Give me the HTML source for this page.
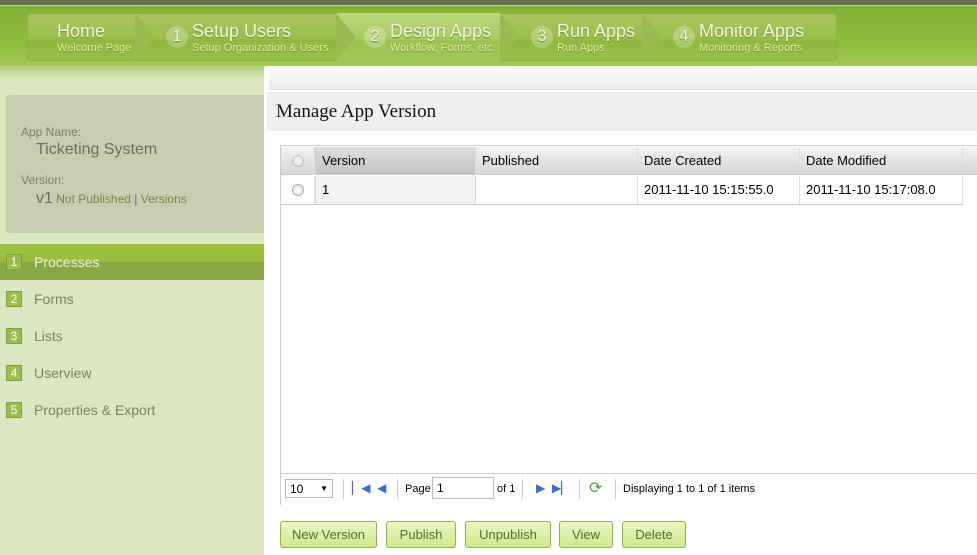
<!DOCTYPE html>
<html><head><style>
*{margin:0;padding:0;box-sizing:border-box}
body{width:977px;height:555px;overflow:hidden;font-family:"Liberation Sans",sans-serif;background:#dce6c0;position:relative}
.top{position:absolute;left:0;top:0;width:977px;height:6px;background:#667050;border-bottom:1px solid #b9d27a}
.hdr{position:absolute;left:0;top:6px;width:977px;height:60px;background:linear-gradient(#82b236,#90bf40 70%,#a4c95a)}
.tabs{position:absolute;left:27px;top:13px;width:810px;height:48px;border-radius:4px;background:linear-gradient(#a9c65e,#9cbd4e 55%,#8fb840 56%,#96bd48);border:1px solid #8db03f}
.tab{position:absolute;top:13px;height:48px;color:#f2f6e0;text-shadow:0 1px 1px #6a8a2a}
.tab .t{font-size:18px;position:absolute;top:8px;white-space:nowrap}
.tab .s{font-size:11px;color:#e4ef9a;position:absolute;top:29px;white-space:nowrap}
.tab .n{position:absolute;top:13px;width:22px;height:22px;border-radius:50%;background:rgba(255,255,255,.25);font-size:16px;text-align:center;line-height:22px}
.sep{position:absolute;top:13px;width:0;height:0;border-top:24px solid transparent;border-bottom:24px solid transparent;border-left:20px solid #9ab94e}
.band{position:absolute;left:0;top:66px;width:264px;height:14px;background:linear-gradient(#b5cf7a,#dce6c0)}
.info{position:absolute;left:6px;top:95px;width:258px;height:138px;background:#c6cdb0;border-radius:4px 0 0 4px;color:#7d8466;font-size:12px}
.menu{position:absolute;left:0;width:264px;height:36px;font-size:14px;color:#7a8268}
.menu .b{position:absolute;left:6px;top:10px;width:16px;height:16px;border:1px solid #7fa03a;background:#9cbd4e;color:#fff;font-size:12px;text-align:center;line-height:14px}
.menu span.l{position:absolute;left:34px;top:10px}
.main{position:absolute;left:264px;top:66px;width:713px;height:489px;background:#fff;border-radius:4px 0 0 0}
.bar1{position:absolute;left:5px;top:3px;width:708px;height:21px;background:linear-gradient(#fafafa,#ececec);border-bottom:1px solid #ddd}
.bar2{position:absolute;left:3px;top:26px;width:710px;height:39px;background:#efefef;font-family:"Liberation Serif",serif;font-size:19px;padding:9px 0 0 9px;color:#111}
.grid{position:absolute;left:280px;top:145px;width:697px;height:360px;border:1px solid #ccc;border-right:none;font-size:13px;color:#000}
.hrow{position:absolute;left:0;top:1px;height:28px;width:697px;background:linear-gradient(#f4f4f4,#e6e6e6 40%,#d8d8d8);border-bottom:1px solid #ccc}
.c{position:absolute;top:0;height:100%;border-right:1px solid #ddd;padding:6px 6px}
.rad{position:absolute;width:12px;height:12px;border-radius:50%;border:1px solid #aaa;background:radial-gradient(#fff,#ddd)}
.pager{position:absolute;left:0;top:327px;width:697px;height:32px;border-top:1px solid #ccc;background:#fff;font-size:11px}
.btn{position:absolute;top:521px;height:27px;border:1px solid #8fb34a;border-radius:3px;background:linear-gradient(#eaf7c4,#cfe88c);color:#5a6a3a;font-size:13px;text-align:center;line-height:25px}
</style></head><body>
<div class="top"></div>
<div class="hdr"></div>
<div class="tabs"></div>
<div style="position:absolute;left:337px;top:13px;width:163px;height:48px;background:linear-gradient(#bcd77e,#a8cb62 55%,#9cc452 56%,#a2c658)"></div>
<div class="sep" style="left:135px"></div><div class="sep" style="left:336px"></div><div class="sep" style="left:500px"></div><div class="sep" style="left:642px"></div>
<div class="tab" style="left:57px"><div class="t">Home</div><div class="s">Welcome Page</div></div>
<div class="tab" style="left:166px"><div class="n">1</div><div class="t" style="left:26px">Setup Users</div><div class="s" style="left:26px">Setup Organization &amp; Users</div></div>
<div class="tab" style="left:364px"><div class="n">2</div><div class="t" style="left:26px">Design Apps</div><div class="s" style="left:26px">Workflow, Forms, etc</div></div>
<div class="tab" style="left:531px"><div class="n">3</div><div class="t" style="left:26px">Run Apps</div><div class="s" style="left:26px">Run Apps</div></div>
<div class="tab" style="left:673px"><div class="n">4</div><div class="t" style="left:26px">Monitor Apps</div><div class="s" style="left:26px">Monitoring &amp; Reports</div></div>
<div class="band"></div>
<div class="info">
<div style="position:absolute;left:15px;top:30px">App Name:</div>
<div style="position:absolute;left:30px;top:46px;font-size:16px;color:#6a6e60">Ticketing System</div>
<div style="position:absolute;left:15px;top:78px">Version:</div>
<div style="position:absolute;left:30px;top:95px;color:#7a8250"><span style="font-size:16px;color:#6a6e60">v1</span> Not Published <span style="color:#666">|</span> Versions</div>
</div>
<div class="menu" style="top:244px;background:linear-gradient(#9dbf40 50%,#8aa846 50%)"><div class="b">1</div><span class="l" style="color:#eef3dc">Processes</span></div>
<div class="menu" style="top:281px"><div class="b">2</div><span class="l">Forms</span></div>
<div class="menu" style="top:318px"><div class="b">3</div><span class="l">Lists</span></div>
<div class="menu" style="top:355px"><div class="b">4</div><span class="l">Userview</span></div>
<div class="menu" style="top:392px"><div class="b">5</div><span class="l">Properties &amp; Export</span></div>
<div class="main"><div class="bar1"></div><div class="bar2">Manage App Version</div></div>
<div class="grid">
<div class="hrow">
<div class="c" style="left:0;width:34px"><div class="rad" style="left:11px;top:8px;opacity:.6"></div></div>
<div class="c" style="left:34px;width:161px;background:linear-gradient(#e0e0e0,#c2c2c2);border-left:1px solid #ccc">Version</div>
<div class="c" style="left:195px;width:162px">Published</div>
<div class="c" style="left:357px;width:162px">Date Created</div>
<div class="c" style="left:519px;width:163px">Date Modified</div>
</div>
<div style="position:absolute;left:0;top:30px;width:682px;height:29px;border-bottom:1px solid #ccc">
<div class="c" style="left:0;width:34px"><div class="rad" style="left:11px;top:8px"></div></div>
<div class="c" style="left:34px;width:161px;background:#f2f2f2;border-left:1px solid #ddd">1</div>
<div class="c" style="left:195px;width:162px"></div>
<div class="c" style="left:357px;width:162px">2011-11-10 15:15:55.0</div>
<div class="c" style="left:519px;width:163px">2011-11-10 15:17:08.0</div>
</div>
<div class="pager">
<div style="position:absolute;left:4px;top:5px;width:48px;height:19px;border:1px solid #bbb;font-size:12px;padding:2px 4px">10 <span style="position:absolute;right:4px;font-size:8px;top:4px">▼</span></div>
<div style="position:absolute;left:62px;top:5px;height:20px;border-left:1px solid #ccc"></div>
<div style="position:absolute;left:71px;top:7px;color:#3a6fd0;font-size:12px">&#x258F;◀ &nbsp;◀</div>
<div style="position:absolute;left:116px;top:5px;height:20px;border-left:1px solid #ccc"></div>
<div style="position:absolute;left:124px;top:9px">Page</div>
<div style="position:absolute;left:151px;top:3px;width:62px;height:22px;border:1px solid #bbb;font-size:12px;padding:3px 4px">1</div>
<div style="position:absolute;left:216px;top:9px">of 1</div>
<div style="position:absolute;left:241px;top:5px;height:20px;border-left:1px solid #ccc"></div>
<div style="position:absolute;left:255px;top:7px;color:#3a6fd0;font-size:12px">▶ &nbsp;▶&#x258F;</div>
<div style="position:absolute;left:298px;top:5px;height:20px;border-left:1px solid #ccc"></div>
<div style="position:absolute;left:308px;top:4px;color:#4aa83a;font-size:16px">⟳</div>
<div style="position:absolute;left:334px;top:5px;height:20px;border-left:1px solid #ccc"></div>
<div style="position:absolute;left:342px;top:9px">Displaying 1 to 1 of 1 items</div>
</div>
</div>
<div class="btn" style="left:280px;width:97px">New Version</div>
<div class="btn" style="left:386px;width:70px">Publish</div>
<div class="btn" style="left:465px;width:86px">Unpublish</div>
<div class="btn" style="left:559px;width:54px">View</div>
<div class="btn" style="left:622px;width:64px">Delete</div>
</body></html>
